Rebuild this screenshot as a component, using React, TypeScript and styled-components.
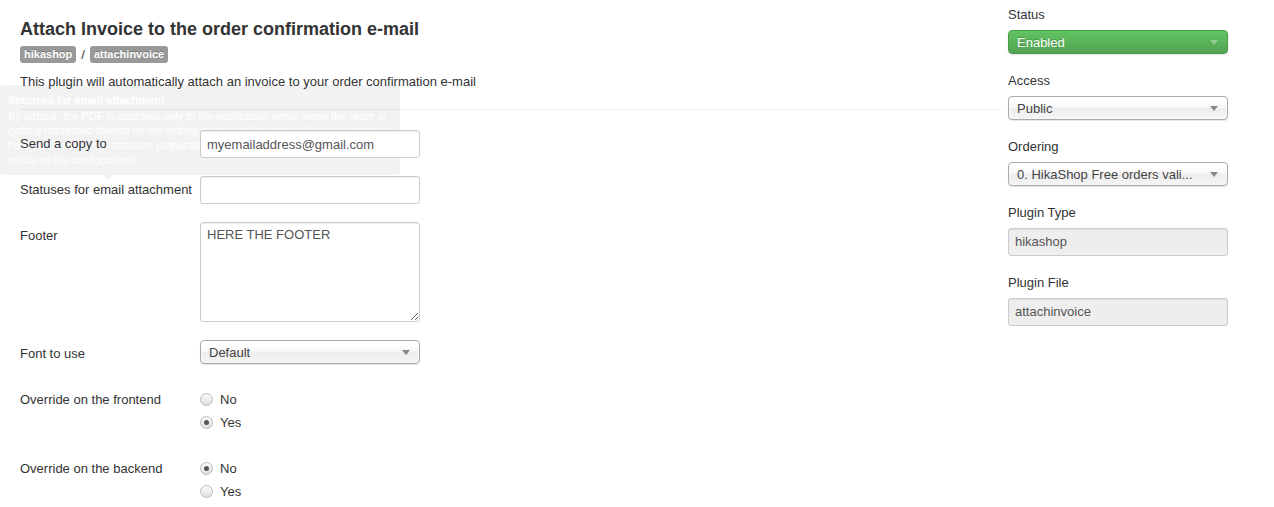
import styled, { createGlobalStyle } from 'styled-components'

const GlobalStyle = createGlobalStyle`
  html, body {
    margin: 0;
    padding: 0;
    background: #fff;
  }
  body {
    font-family: "Liberation Sans", Arial, sans-serif;
    font-size: 13px;
    color: #333;
  }
`

type SelectTone = 'default' | 'success'

interface Field {
  label: string
  kind: 'select' | 'readonly'
  value: string
  tone?: SelectTone
}

const sideFields: Field[] = [
  { label: 'Status', kind: 'select', value: 'Enabled', tone: 'success' },
  { label: 'Access', kind: 'select', value: 'Public' },
  { label: 'Ordering', kind: 'select', value: '0. HikaShop Free orders vali...' },
  { label: 'Plugin Type', kind: 'readonly', value: 'hikashop' },
  { label: 'Plugin File', kind: 'readonly', value: 'attachinvoice' }
]

function RadioGroup({ name, checked }: { name: string; checked: 'no' | 'yes' }) {
  return (
    <Radios>
      <RadioOption>
        <RadioInput type="radio" name={name} defaultChecked={checked === 'no'} />
        No
      </RadioOption>
      <RadioOption>
        <RadioInput type="radio" name={name} defaultChecked={checked === 'yes'} />
        Yes
      </RadioOption>
    </Radios>
  )
}

export default function App() {
  return (
    <Page>
      <GlobalStyle />
      <Main>
        <Title>Attach Invoice to the order confirmation e-mail</Title>
        <Crumbs>
          <Badge>hikashop</Badge>
          <Slash>/</Slash>
          <Badge>attachinvoice</Badge>
        </Crumbs>
        <Description>
          This plugin will automatically attach an invoice to your order confirmation e-mail
        </Description>
        <Divider />

        {/* popover of the "Statuses for email attachment" label, caught mid fade-in */}
        <Tooltip>
          <TooltipTitle>Statuses for email attachment</TooltipTitle>
          By default, the PDF is attached only to the notification email when the order is
          <br />
          getting confirmed (based on the setting in the configuration). You can configure
          <br />
          here additional order statuses (separated by commas) which will be added to the
          <br />
          status of the configuration.
        </Tooltip>

        <Form>
          <Row>
            <Label>Send a copy to</Label>
            <TextInput defaultValue="myemailaddress@gmail.com" />
          </Row>
          <Row>
            <Label>Statuses for email attachment</Label>
            <TextInput defaultValue="" />
          </Row>
          <Row>
            <Label>Footer</Label>
            <TextArea defaultValue="HERE THE FOOTER" />
          </Row>
          <Row>
            <Label>Font to use</Label>
            <Select $tone="default">
              <span>Default</span>
              <Caret $tone="default" />
            </Select>
          </Row>
          <Row>
            <RadioLabel>Override on the frontend</RadioLabel>
            <RadioGroup name="frontend" checked="yes" />
          </Row>
          <Row>
            <RadioLabel>Override on the backend</RadioLabel>
            <RadioGroup name="backend" checked="no" />
          </Row>
        </Form>
      </Main>

      <Sidebar>
        {sideFields.map((f) => (
          <SideGroup key={f.label}>
            <SideLabel>{f.label}</SideLabel>
            {f.kind === 'select' ? (
              <Select $tone={f.tone ?? 'default'}>
                <span>{f.value}</span>
                <Caret $tone={f.tone ?? 'default'} />
              </Select>
            ) : (
              <ReadOnly>{f.value}</ReadOnly>
            )}
          </SideGroup>
        ))}
      </Sidebar>
    </Page>
  )
}

// Styled Components

const Page = styled.div`
  display: flex;
  align-items: flex-start;
  width: 1274px;
  height: 507px;
  overflow: hidden;
`

const Main = styled.div`
  position: relative;
  width: 1000px;
  padding: 19px 0 0 20px;
  box-sizing: border-box;
`

const Title = styled.h1`
  margin: 0;
  font-size: 18px;
  line-height: 20px;
  font-weight: bold;
  color: #333;
`

const Crumbs = styled.div`
  display: flex;
  align-items: center;
  gap: 5px;
  margin-top: 7px;
  height: 17px;
`

const Badge = styled.span`
  display: inline-block;
  padding: 0 4px;
  height: 17px;
  line-height: 17px;
  border-radius: 3px;
  background: #999;
  color: #fff;
  font-size: 11px;
  font-weight: bold;
  text-shadow: 0 -1px 0 rgba(0, 0, 0, 0.25);
`

const Slash = styled.span`
  font-size: 13px;
  color: #333;
`

const Description = styled.p`
  margin: 10px 0 0;
  font-size: 13px;
  line-height: 18px;
`

const Divider = styled.hr`
  margin: 18px 0 0;
  border: 0;
  border-top: 1px solid #eee;
`

const Tooltip = styled.div`
  position: absolute;
  left: 0;
  top: 85px;
  width: 400px;
  height: 90px;
  box-sizing: border-box;
  padding: 8px 6px 0 8px;
  border-radius: 4px;
  background: rgba(0, 0, 0, 0.05);
  color: #fff;
  font-size: 11px;
  line-height: 14.7px;
  white-space: nowrap;
  z-index: 0;

  &::after {
    content: '';
    position: absolute;
    left: 103px;
    bottom: -5px;
    border-left: 5px solid transparent;
    border-right: 5px solid transparent;
    border-top: 5px solid rgba(0, 0, 0, 0.05);
  }
`

const TooltipTitle = styled.div`
  font-weight: bold;
  margin-bottom: 1px;
`

const Form = styled.div`
  position: relative;
  z-index: 1;
  display: flex;
  flex-direction: column;
  gap: 18px;
  margin-top: 20px;
`

const Row = styled.div`
  display: flex;
  align-items: flex-start;
`

const Label = styled.label`
  width: 180px;
  padding-top: 5px;
  line-height: 18px;
  font-size: 13px;
  color: #333;
  white-space: nowrap;
`

const RadioLabel = styled(Label)`
  padding-top: 5.5px;
  line-height: 23px;
`

const TextInput = styled.input`
  width: 220px;
  height: 28px;
  box-sizing: border-box;
  padding: 4px 6px;
  border: 1px solid #ccc;
  border-radius: 3px;
  box-shadow: inset 0 1px 1px rgba(0, 0, 0, 0.075);
  background: #fff;
  font-family: "Liberation Sans", Arial, sans-serif;
  font-size: 13px;
  color: #555;
  outline: none;
`

const TextArea = styled.textarea`
  width: 220px;
  height: 100px;
  box-sizing: border-box;
  padding: 3px 6px;
  border: 1px solid #ccc;
  border-radius: 3px;
  box-shadow: inset 0 1px 1px rgba(0, 0, 0, 0.075);
  font-family: "Liberation Sans", Arial, sans-serif;
  font-size: 13px;
  line-height: 18px;
  color: #555;
  outline: none;
`

const Select = styled.div<{ $tone: SelectTone }>`
  display: flex;
  align-items: center;
  justify-content: space-between;
  width: 220px;
  height: 24px;
  box-sizing: border-box;
  padding: 0 9px 0 8px;
  border-radius: 4px;
  font-size: 13px;
  white-space: nowrap;
  ${(p) =>
    p.$tone === 'success'
      ? `
    background: linear-gradient(#62c462, #51a351);
    border: 1px solid #4a9a4a;
    color: #fff;
    text-shadow: 0 -1px 0 rgba(0, 0, 0, 0.2);
    box-shadow: 0 1px 2px rgba(0, 0, 0, 0.1);
  `
      : `
    background: linear-gradient(#fff 20%, #f6f6f6 50%, #eee 52%, #f4f4f4 100%);
    border: 1px solid #aaa;
    color: #444;
    box-shadow: 0 0 3px #fff inset, 0 1px 1px rgba(0, 0, 0, 0.1);
  `}
`

const Caret = styled.span<{ $tone: SelectTone }>`
  width: 0;
  height: 0;
  border-left: 4px solid transparent;
  border-right: 4px solid transparent;
  border-top: 5px solid ${(p) => (p.$tone === 'success' ? 'rgba(255,255,255,0.35)' : '#888')};
`

const Radios = styled.div`
  display: flex;
  flex-direction: column;
  padding-top: 5.5px;
`

const RadioOption = styled.label`
  display: flex;
  align-items: center;
  gap: 7px;
  height: 23px;
  font-size: 13px;
  color: #333;
`

const RadioInput = styled.input`
  appearance: none;
  margin: 0;
  width: 13px;
  height: 13px;
  border-radius: 50%;
  border: 1px solid #bbb;
  background: linear-gradient(#fcfcfc, #dedede);
  box-sizing: border-box;
  position: relative;

  &:checked::after {
    content: '';
    position: absolute;
    left: 3px;
    top: 3px;
    width: 5px;
    height: 5px;
    border-radius: 50%;
    background: #555;
  }
`

const Sidebar = styled.div`
  display: flex;
  flex-direction: column;
  gap: 18px;
  width: 220px;
  margin-left: 8px;
  padding-top: 6px;
`

const SideGroup = styled.div`
  display: flex;
  flex-direction: column;
  gap: 6px;
`

const SideLabel = styled.div`
  line-height: 18px;
  font-size: 13px;
  color: #333;
`

const ReadOnly = styled.div`
  height: 28px;
  box-sizing: border-box;
  padding: 0 6px;
  line-height: 26px;
  border: 1px solid #ccc;
  border-radius: 3px;
  background: #eee;
  box-shadow: inset 0 1px 1px rgba(0, 0, 0, 0.075);
  color: #555;
  font-size: 13px;
`
